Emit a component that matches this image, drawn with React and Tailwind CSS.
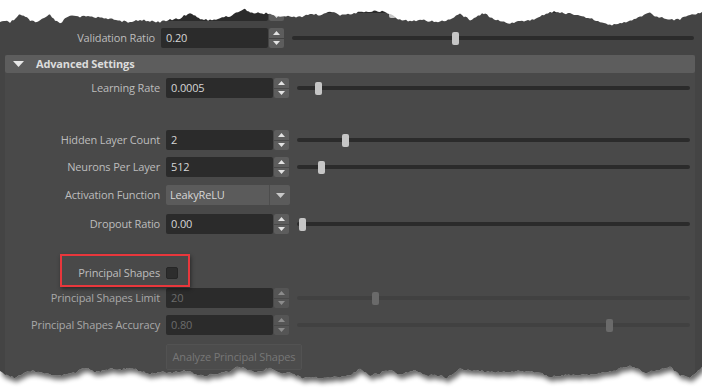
import React from "react";

const topEdge = [
  [0, 23], [5, 21], [10, 22], [15, 19], [20, 14], [25, 17], [30, 20], [35, 22], [40, 20], [45, 17],
  [50, 15], [55, 20], [60, 24], [65, 19], [70, 16], [80, 17], [90, 16], [100, 18], [110, 19], [120, 21],
  [130, 22], [140, 20], [150, 21], [160, 22], [170, 20], [180, 18], [190, 13], [195, 15], [200, 19],
  [210, 20], [220, 18], [230, 16], [240, 11], [245, 9], [250, 12], [260, 13], [270, 14], [280, 17],
  [290, 16], [300, 17], [310, 14], [320, 15], [330, 11], [340, 15], [350, 14], [360, 12], [370, 11],
  [380, 11], [390, 14], [400, 20], [410, 21], [420, 20], [430, 21], [440, 22], [450, 19], [460, 14],
  [465, 17], [470, 20], [480, 15], [485, 13], [490, 17], [500, 21], [510, 23], [520, 21], [530, 21],
  [540, 17], [550, 12], [560, 12], [570, 14], [580, 16], [590, 18], [600, 22], [610, 25], [620, 24],
  [630, 20], [640, 17], [650, 12], [655, 16], [660, 17], [670, 20], [680, 19], [690, 15], [702, 12],
];

const bottomEdge = [
  [0, 372], [5, 375], [10, 376], [15, 378], [20, 375], [25, 373], [32, 371], [40, 372], [46, 374],
  [52, 375], [60, 376], [68, 374], [75, 373], [82, 369], [88, 368], [95, 372], [102, 371], [110, 369],
  [118, 370], [125, 369], [132, 368], [140, 371], [150, 374], [160, 372], [170, 373], [180, 371],
  [190, 371], [197, 375], [205, 376], [212, 374], [220, 373], [230, 371], [237, 367], [243, 368],
  [250, 370], [258, 372], [264, 370], [270, 368], [276, 371], [282, 374], [290, 372], [296, 375],
  [302, 378], [310, 377], [320, 378], [330, 377], [340, 377], [350, 375], [360, 369], [370, 375],
  [380, 373], [390, 370], [400, 375], [415, 370], [425, 375], [440, 376], [447, 378], [460, 369],
  [480, 371], [500, 372], [520, 371], [540, 373], [550, 377], [565, 375], [585, 375], [600, 373],
  [615, 371], [622, 368], [630, 365], [638, 369], [645, 373], [658, 370], [670, 367], [680, 375],
  [690, 378], [696, 372], [702, 367],
];

// roughen the hand-picked outline with small deterministic jitter
function rough(points, amp) {
  const out = [];
  for (let i = 0; i < points.length - 1; i++) {
    const [x1, y1] = points[i];
    const [x2, y2] = points[i + 1];
    for (let x = x1; x < x2; x += 2) {
      const t = (x - x1) / (x2 - x1);
      const j = Math.sin(x * 12.9898) * 43758.5453;
      const n = (j - Math.floor(j) - 0.5) * amp;
      out.push([x, y1 + (y2 - y1) * t + n]);
    }
  }
  out.push(points[points.length - 1]);
  return out;
}

const toStr = (pts) => pts.map(([x, y]) => `${x},${y.toFixed(1)}`).join(" ");

function TornEdges() {
  const top = rough(topEdge, 2);
  const bottom = rough(bottomEdge, 2);
  const topPoly = `0,0 702,0 ${toStr([...top].reverse())}`;
  const bottomPoly = `${toStr(bottom)} 702,392 0,392`;
  const abovePoly = `0,300 702,300 ${toStr([...bottom].reverse())}`;
  return (
    <svg className="absolute inset-0 pointer-events-none" width="702" height="392" viewBox="0 0 702 392">
      <defs>
        <clipPath id="paper">
          <polygon points={bottomPoly} />
        </clipPath>
        <filter id="blur" x="-10%" y="-50%" width="120%" height="200%">
          <feGaussianBlur stdDeviation="2.6" />
        </filter>
      </defs>
      <polygon points={topPoly} fill="#ffffff" />
      <polygon points={bottomPoly} fill="#ffffff" />
      <g clipPath="url(#paper)">
        <polygon points={abovePoly} fill="#000" opacity="0.6" transform="translate(2 4)" filter="url(#blur)" />
      </g>
    </svg>
  );
}

function Spinner({ disabled }) {
  const fill = disabled ? "#8c8c8c" : "#e2e2e2";
  return (
    <div className="ml-[1px] flex h-[20px] w-[15px] flex-col gap-[1px]">
      <div className={`flex flex-1 items-center justify-center rounded-t-[2px] ${disabled ? "bg-[#555555]" : "bg-[#5d5d5d]"}`}>
        <svg width="7" height="4" viewBox="0 0 7 4">
          <path d="M3.5 0L7 4H0z" fill={fill} />
        </svg>
      </div>
      <div className={`flex flex-1 items-center justify-center rounded-b-[2px] ${disabled ? "bg-[#555555]" : "bg-[#5d5d5d]"}`}>
        <svg width="7" height="4" viewBox="0 0 7 4">
          <path d="M0 0H7L3.5 4z" fill={fill} />
        </svg>
      </div>
    </div>
  );
}

function Slider({ pos, disabled, outer }) {
  return (
    <div
      className={`relative ml-[2px] h-[4px] flex-1 rounded-full ${disabled ? "bg-[#414141]" : "bg-[#2b2b2b]"} ${outer ? "mr-[8px]" : "mr-[5px]"}`}
    >
      <div
        className={`absolute top-[-4px] h-[13px] w-[7px] rounded-[2px] ${disabled ? "bg-[#6a6a6a]" : "bg-[#c6c6c6]"}`}
        style={{ left: pos }}
      />
    </div>
  );
}

function Label({ children, disabled }) {
  return (
    <div className={`w-[155px] shrink-0 whitespace-nowrap text-right ${disabled ? "text-[#a8a8a8]" : "text-[#bdbdbd]"}`}>
      {children}
    </div>
  );
}

function Row({ label, value, pos, disabled, outer, className = "" }) {
  return (
    <div className={`flex h-[20px] items-center gap-[6px] ${className}`}>
      <Label disabled={disabled}>{label}</Label>
      <div className="flex h-[20px] items-center">
        <div
          className={`flex h-[20px] w-[107px] items-center rounded-[2px] bg-[#2b2b2b] pl-[5px] ${disabled ? "text-[#6b6b6b]" : "text-[#d6d6d6]"}`}
        >
          {value}
        </div>
        <Spinner disabled={disabled} />
      </div>
      <Slider pos={pos} disabled={disabled} outer={outer} />
    </div>
  );
}

export default function App() {
  return (
    <div className="relative h-[392px] w-[702px] overflow-hidden bg-[#444444] text-[11px] leading-[16px] tracking-[-0.15px] [font-family:'Open_Sans',sans-serif]">
      <div className="flex h-full flex-col pt-[1px]">
        <Row label="" value="" pos={97} outer />
        <Row label="Validation Ratio" value="0.20" pos={160} outer className="mt-[7px]" />

        <div className="ml-[5px] mr-[7px] mt-[7px] flex flex-1 flex-col bg-[#494949]">
          <div className="flex h-[18px] shrink-0 items-center rounded-[2px] bg-[#5d5d5d] pl-[8px] font-bold text-[#dcdcdc]">
            <svg width="11" height="6" viewBox="0 0 11 6" className="mr-[12px]">
              <path d="M0 0H11L5.5 6z" fill="#e8e8e8" />
            </svg>
            Advanced Settings
          </div>

          <Row label="Learning Rate" value="0.0005" pos={18} className="mt-[5px]" />
          <Row label="Hidden Layer Count" value="2" pos={45} className="mt-[32px]" />
          <Row label="Neurons Per Layer" value="512" pos={21} className="mt-[7px]" />

          <div className="mt-[8px] flex h-[20px] items-center gap-[6px]">
            <Label>Activation Function</Label>
            <div className="flex h-[20px] w-[124px] items-center rounded-[2px] bg-[#5b5b5b] text-[#d6d6d6]">
              <div className="flex-1 pl-[4px]">LeakyReLU</div>
              <div className="h-full w-[1px] bg-[#4d4d4d]" />
              <div className="flex w-[20px] items-center justify-center">
                <svg width="9" height="5" viewBox="0 0 9 5">
                  <path d="M0 0H9L4.5 5z" fill="#c8c8c8" />
                </svg>
              </div>
            </div>
          </div>

          <Row label="Dropout Ratio" value="0.00" pos={2} className="mt-[9px]" />

          <div className="mt-[29px] flex h-[20px] items-center gap-[6px]">
            <Label>Principal Shapes</Label>
            <div className="h-[12px] w-[12px] rounded-[2px] border border-[#262626] bg-[#2d2d2d]" />
          </div>

          <Row label="Principal Shapes Limit" value="20" pos={75} disabled className="mt-[5px]" />
          <Row label="Principal Shapes Accuracy" value="0.80" pos={309} disabled className="mt-[7px]" />

          <div className="ml-[161px] mt-[9px] flex h-[26px] w-[136px] items-center justify-center whitespace-nowrap rounded-[2px] border border-[#525252] bg-[#4c4c4c] text-[#777777]">
            Analyze Principal Shapes
          </div>
        </div>
      </div>

      <div className="absolute left-[60px] top-[254px] h-[33px] w-[130px] border-2 border-[#e8373c] shadow-[1px_2px_4px_rgba(0,0,0,0.45)]" />

      <TornEdges />
    </div>
  );
}
